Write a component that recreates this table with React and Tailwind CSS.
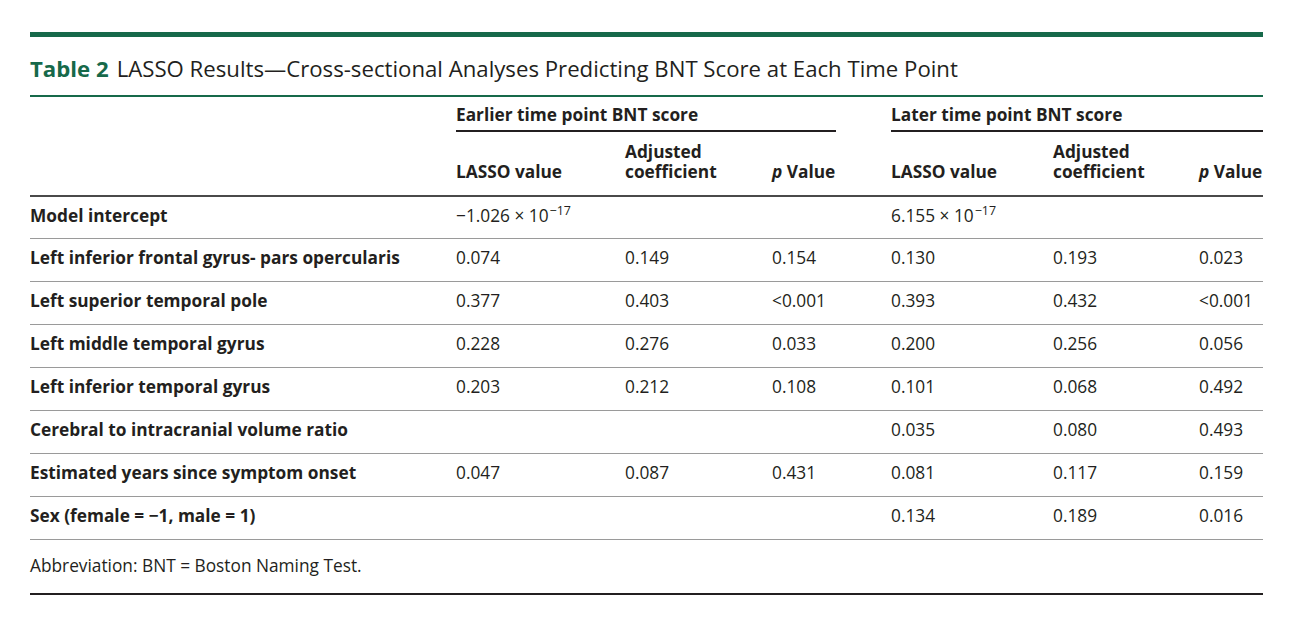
import React from 'react';

const rows = [
	{ label: 'Model intercept', e: ['−1.026 × 10', '−17'], l: ['6.155 × 10', '−17'] },
	{ label: 'Left inferior frontal gyrus- pars opercularis', e: ['0.074', '0.149', '0.154'], l: ['0.130', '0.193', '0.023'] },
	{ label: 'Left superior temporal pole', e: ['0.377', '0.403', '<0.001'], l: ['0.393', '0.432', '<0.001'] },
	{ label: 'Left middle temporal gyrus', e: ['0.228', '0.276', '0.033'], l: ['0.200', '0.256', '0.056'] },
	{ label: 'Left inferior temporal gyrus', e: ['0.203', '0.212', '0.108'], l: ['0.101', '0.068', '0.492'] },
	{ label: 'Cerebral to intracranial volume ratio', e: ['', '', ''], l: ['0.035', '0.080', '0.493'] },
	{ label: 'Estimated years since symptom onset', e: ['0.047', '0.087', '0.431'], l: ['0.081', '0.117', '0.159'] },
	{ label: 'Sex (female = −1, male = 1)', e: ['', '', ''], l: ['0.134', '0.189', '0.016'] },
];

const Sci = ({ v }) => (
	<span>
		{v[0]}
		<sup className="relative -top-[7px] ml-[1px] text-[12.5px]">{v[1]}</sup>
	</span>
);

const ValueCells = ({ vals, intercept }) =>
	intercept ? (
		<td className="pb-[3px] align-middle" colSpan={3}>
			<Sci v={vals} />
		</td>
	) : (
		<>
			<td className="pb-[3px] align-middle">{vals[0]}</td>
			<td className="pb-[3px] align-middle">{vals[1]}</td>
			<td className="pb-[3px] align-middle">{vals[2]}</td>
		</>
	);

export default function App() {
	return (
		<div
			className="min-h-[625px] w-[1295px] bg-white px-[30px] pt-[32px] text-[#231f20]"
			style={{ fontFamily: '"Open Sans", "Noto Sans", sans-serif' }}
		>
			<div className="w-[1233px]">
				<div className="h-[5px] bg-[#16694a]" />
				<div className="flex h-[58px] items-center pt-[6px] text-[22.2px] leading-none">
					<span className="font-bold text-[#16694a]">Table 2</span>
					<span className="ml-[8px]">LASSO Results—Cross-sectional Analyses Predicting BNT Score at Each Time Point</span>
				</div>
				<div className="h-[2px] bg-[#16694a]" />

				<table className="w-full table-fixed border-collapse text-left text-[17.3px] leading-[20px]">
					<colgroup>
						<col className="w-[426px]" />
						<col className="w-[169px]" />
						<col className="w-[147px]" />
						<col className="w-[64px]" />
						<col className="w-[55px]" />
						<col className="w-[162px]" />
						<col className="w-[146px]" />
						<col className="w-[64px]" />
					</colgroup>
					<thead className="font-bold">
						<tr className="h-[34px]">
							<th />
							<th colSpan={3} className="border-b-2 border-[#231f20] pt-[2px] align-middle font-bold">
								Earlier time point BNT score
							</th>
							<th />
							<th colSpan={3} className="border-b-2 border-[#231f20] pt-[2px] align-middle font-bold">
								Later time point BNT score
							</th>
						</tr>
						<tr className="h-[65px] border-b-2 border-[#4a4a4a]">
							<th />
							<th className="pt-[16px] font-bold">LASSO value</th>
							<th className="pb-[3px] font-bold">
								Adjusted
								<br />
								coefficient
							</th>
							<th className="pt-[16px] font-bold whitespace-nowrap">
								<i className="font-bold">p</i> Value
							</th>
							<th />
							<th className="pt-[16px] font-bold">LASSO value</th>
							<th className="pb-[3px] font-bold">
								Adjusted
								<br />
								coefficient
							</th>
							<th className="pt-[16px] font-bold whitespace-nowrap">
								<i className="font-bold">p</i> Value
							</th>
						</tr>
					</thead>
					<tbody>
						{rows.map((r, i) => (
							<tr
								key={r.label}
								className={`${i === 0 ? 'h-[42px]' : 'h-[43px] border-t'} border-[#9a9a9a]`}
							>
								<td className="pb-[3px] font-bold whitespace-nowrap">{r.label}</td>
								<ValueCells vals={r.e} intercept={i === 0} />
								<td />
								<ValueCells vals={r.l} intercept={i === 0} />
							</tr>
						))}
					</tbody>
				</table>

				<div className="flex h-[54px] items-center border-t border-[#9a9a9a] pb-[1px] text-[17.3px]">
					Abbreviation: BNT = Boston Naming Test.
				</div>
				<div className="h-[2px] bg-[#231f20]" />
			</div>
		</div>
	);
}
